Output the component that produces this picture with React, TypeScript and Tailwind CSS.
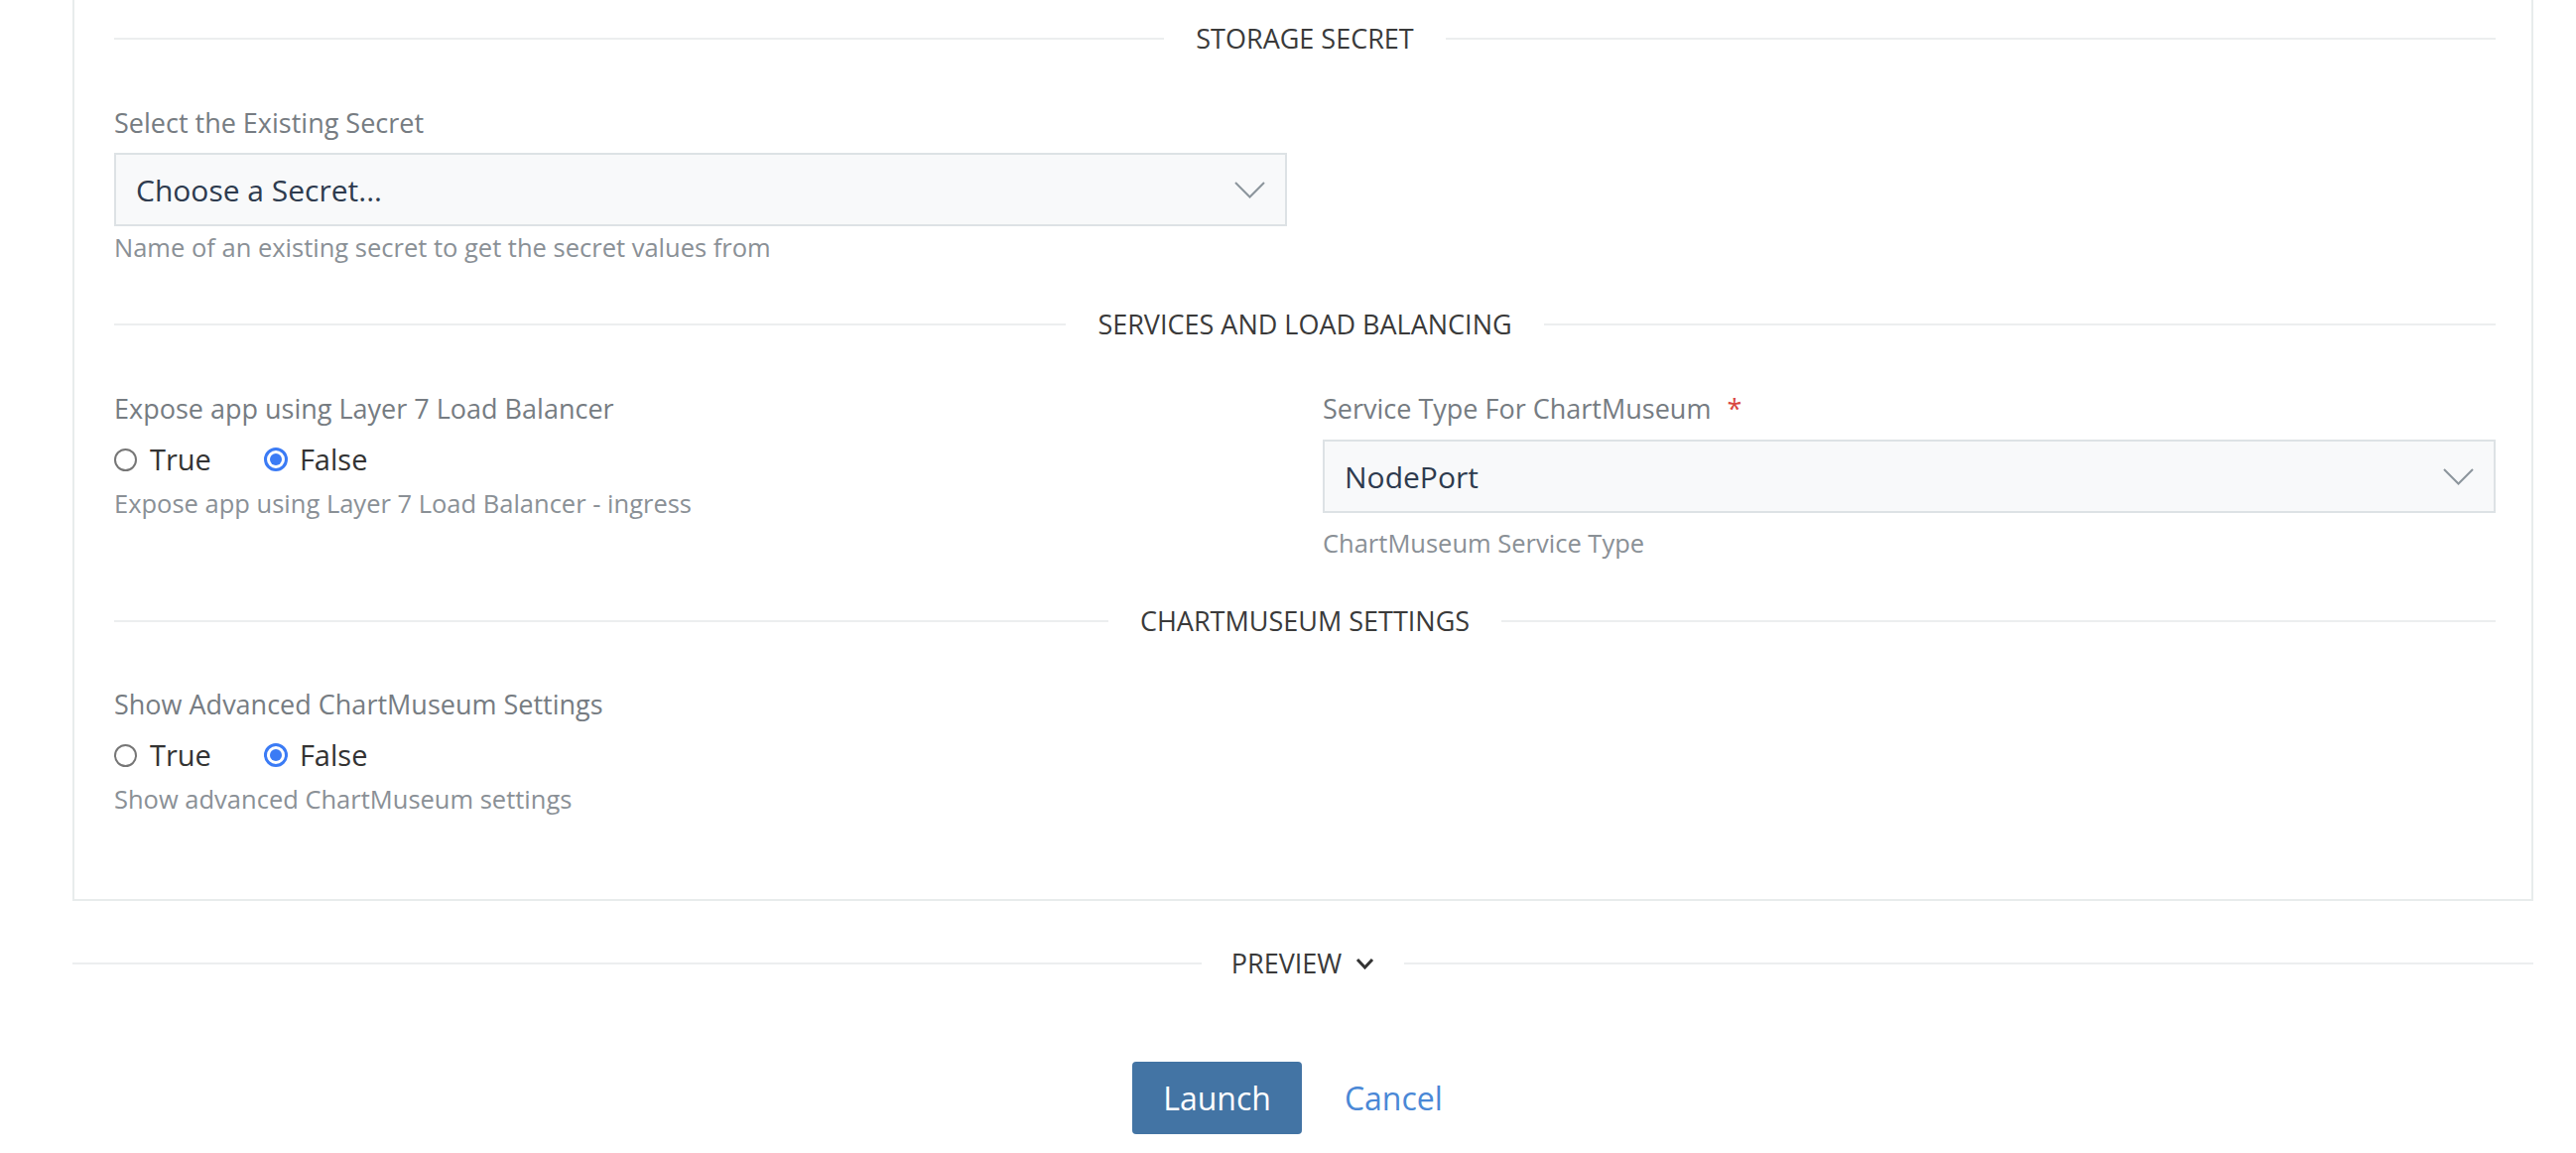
import React from "react";

function SectionTitle({ children, pad = "px-[32px]" }: { children: React.ReactNode; pad?: string }) {
  return (
    <div className="flex h-[36px] items-center">
      <div className="h-[2px] flex-1 bg-[#eceeef]" />
      <div className={`${pad} flex items-center gap-[14px] text-[27px] leading-[36px] uppercase text-[#3a3a3a]`}>
        {children}
      </div>
      <div className="h-[2px] flex-1 bg-[#eceeef]" />
    </div>
  );
}

function Chevron() {
  return (
    <svg width="31" height="17" viewBox="0 0 31 17" fill="none">
      <polyline points="1,1 15.5,15.5 30,1" stroke="#8c959c" strokeWidth="2" />
    </svg>
  );
}

function SelectBox({ value }: { value: string }) {
  return (
    <div className="flex h-[74px] items-center justify-between border-2 border-[#dde2e5] bg-[#f8f9fa] pl-[20px] pr-[20px]">
      <span className="text-[30px] text-[#2e3b4e]">{value}</span>
      <Chevron />
    </div>
  );
}

function Label({ children, required }: { children: React.ReactNode; required?: boolean }) {
  return (
    <div className="flex text-[27px] leading-[36px] text-[#767c82]">
      {children}
      {required && <span className="ml-[16px] text-[#d9463f]">*</span>}
    </div>
  );
}

function Help({ children, className = "" }: { children: React.ReactNode; className?: string }) {
  return <div className={`text-[25.5px] leading-[32px] text-[#8a9096] ${className}`}>{children}</div>;
}

function RadioPair() {
  return (
    <div className="mt-[13px] flex h-[40px] items-center text-[29px] text-[#333]">
      <span className="h-[23px] w-[23px] rounded-full border-2 border-[#767676]" />
      <span className="ml-[13px]">True</span>
      <span className="ml-[53px] flex h-[24px] w-[24px] items-center justify-center rounded-full border-[3px] border-[#3b7bf5]">
        <span className="h-[12px] w-[12px] rounded-full bg-[#3b7bf5]" />
      </span>
      <span className="ml-[12px]">False</span>
    </div>
  );
}

export default function App() {
  return (
    <div className="min-h-screen bg-white pl-[73px] pr-[43px] font-['Open_Sans',sans-serif]">
      <div className="border-x-2 border-b-2 border-[#e8ecec] pb-[85px] pl-[40px] pr-[36px] pt-[21px]">
        <SectionTitle>Storage Secret</SectionTitle>
        <div className="mt-[49px] grid grid-cols-2 gap-x-[36px]">
          <div>
            <Label>Select the Existing Secret</Label>
            <div className="mt-[12px]">
              <SelectBox value="Choose a Secret..." />
            </div>
            <Help className="mt-[5px]">Name of an existing secret to get the secret values from</Help>
          </div>
        </div>

        <div className="mt-[44px]">
          <SectionTitle>Services and Load Balancing</SectionTitle>
        </div>
        <div className="mt-[49px] grid grid-cols-2 gap-x-[36px]">
          <div>
            <Label>Expose app using Layer 7 Load Balancer</Label>
            <RadioPair />
            <Help className="mt-[8px]">Expose app using Layer 7 Load Balancer - ingress</Help>
          </div>
          <div>
            <Label required>Service Type For ChartMuseum</Label>
            <div className="mt-[13px]">
              <SelectBox value="NodePort" />
            </div>
            <Help className="mt-[14px]">ChartMuseum Service Type</Help>
          </div>
        </div>

        <div className="mt-[45px]">
          <SectionTitle>ChartMuseum Settings</SectionTitle>
        </div>
        <div className="mt-[48px] grid grid-cols-2 gap-x-[36px]">
          <div>
            <Label>Show Advanced ChartMuseum Settings</Label>
            <RadioPair />
            <Help className="mt-[8px]">Show advanced ChartMuseum settings</Help>
          </div>
        </div>
      </div>

      <div className="mt-[45px]">
        <SectionTitle pad="px-[30px]">
          <span>Preview</span>
          <svg width="19" height="12" viewBox="0 0 19 12" fill="none">
            <polyline points="2,2 9.5,10 17,2" stroke="#333" strokeWidth="3" />
          </svg>
        </SectionTitle>
      </div>

      <div className="mt-[81px] flex justify-center gap-[12px]">
        <button className="h-[73px] rounded-[4px] bg-[#4374a4] px-[31px] text-[32px] text-white">Launch</button>
        <button className="h-[73px] px-[31px] text-[32px] text-[#4a88d6]">Cancel</button>
      </div>
    </div>
  );
}
